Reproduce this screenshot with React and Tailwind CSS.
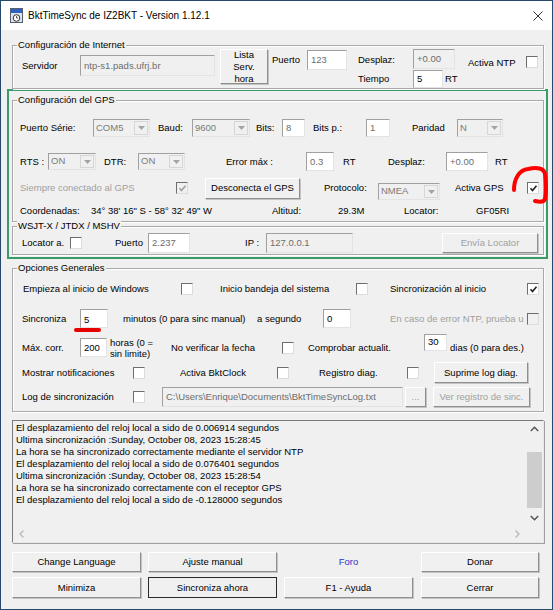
import React from "react";

// =========================
// SMALL WIN32-LIKE CONTROLS
// =========================
const sunken =
  "border border-t-[#a0a0a0] border-l-[#a0a0a0] border-b-[#e3e3e3] border-r-[#e3e3e3]";

const Lbl = ({ className = "", children }) => (
  <span className={"shrink-0 whitespace-nowrap leading-[12px] " + className}>{children}</span>
);

function TextBox({ className = "", value, disabled, gray }) {
  return (
    <div
      className={`shrink-0 flex items-center overflow-hidden whitespace-nowrap px-[3px] leading-[12px] ${sunken} ${
        disabled ? "bg-[#f0f0f0] text-[#6d6d6d]" : "bg-white"
      } ${gray ? "text-[#6d6d6d]" : ""} ${className}`}
    >
      {value}
    </div>
  );
}

function Combo({ className = "", value }) {
  return (
    <div className={`shrink-0 flex bg-[#f0f0f0] ${sunken} ${className}`}>
      <span className="flex-1 pl-[2px] flex items-center text-[#7a7a7a]">{value}</span>
      <span className="w-[14px] m-[1px] flex items-center justify-center border border-[#d6d6d6] bg-[#f0f0f0]">
        <svg width="7" height="4" viewBox="0 0 7 4">
          <path d="M0 0h7L3.5 4z" fill="#a3a3a3" />
        </svg>
      </span>
    </div>
  );
}

function Check({ checked, disabled, className = "" }) {
  return (
    <span
      className={`shrink-0 w-[12px] h-[12px] flex items-center justify-center border border-t-[#6d6d6d] border-l-[#6d6d6d] border-b-[#dcdcdc] border-r-[#dcdcdc] ${
        disabled ? "bg-[#f0f0f0]" : "bg-white"
      } ${className}`}
    >
      {checked && (
        <svg width="9" height="9" viewBox="0 0 9 9">
          <path d="M1.5 4.3l2 2.2 4-4.8" fill="none" stroke={disabled ? "#a0a0a0" : "#222"} strokeWidth="1.6" />
        </svg>
      )}
    </span>
  );
}

function Btn({ className = "", children, disabled, focus }) {
  return (
    <div
      className={`shrink-0 flex items-center justify-center text-center leading-[12px] bg-[#f0f0f0] border ${
        focus
          ? "border-[#2b2b2b]"
          : "border-t-white border-l-white border-b-[#8f8f8f] border-r-[#8f8f8f] shadow-[1px_1px_0_#c4c4c4]"
      } ${disabled ? "text-[#a0a0a0]" : ""} ${className}`}
    >
      {children}
    </div>
  );
}

function Group({ title, className = "", children }) {
  return (
    <div className={`relative shrink-0 border border-[#a9a9a9] shadow-[inset_1px_1px_0_#fff,1px_1px_0_#fff] ${className}`}>
      <span className="absolute left-[4px] top-[-7px] bg-[#f0f0f0] px-[1px] leading-[12px]">{title}</span>
      {children}
    </div>
  );
}

const Chevron = ({ d, color = "#505050" }) => (
  <svg width="9" height="6" viewBox="0 0 9 6">
    <path d={d} fill="none" stroke={color} strokeWidth="1.4" />
  </svg>
);

const logLines = [
  "El desplazamiento del reloj local a sido de 0.006914 segundos",
  "Ultima sincronización :Sunday, October 08, 2023 15:28:45",
  "La hora se ha sincronizado correctamente mediante el servidor NTP",
  "El desplazamiento del reloj local a sido de 0.076401 segundos",
  "Ultima sincronización :Sunday, October 08, 2023 15:28:54",
  "La hora se ha sincronizado correctamente con el receptor GPS",
  "El desplazamiento del reloj local a sido de -0.128000 segundos",
];

export default function App() {
  return (
    <div className="w-[553px] h-[610px] flex flex-col overflow-hidden bg-[#f0f0f0] border border-[#26486b] text-black text-[9.5px] font-['Liberation_Sans',Arial,sans-serif]">
      {/* TITLE BAR */}
      <div className="h-[29px] shrink-0 flex items-center bg-white">
        <svg className="ml-[9px]" width="13" height="15" viewBox="0 0 13 15">
          <rect x="0.5" y="0.5" width="12" height="14" fill="#dde3ea" stroke="#55606e" />
          <rect x="1" y="1" width="11" height="4" fill="#2f5fbf" />
          <circle cx="6.5" cy="10" r="3.3" fill="#fff" stroke="#333" />
          <path d="M6.5 8v2h1.6" fill="none" stroke="#333" strokeWidth="0.8" />
        </svg>
        <span className="ml-[5px] text-[10px]">BktTimeSync de IZ2BKT - Version 1.12.1</span>
        <svg className="ml-auto mr-[9px]" width="10" height="10" viewBox="0 0 10 10">
          <path d="M0.5 0.5l9 9M9.5 0.5l-9 9" stroke="#333" strokeWidth="1" />
        </svg>
      </div>

      {/* CONFIGURACION DE INTERNET */}
      <Group title="Configuración de Internet" className="ml-[11px] mt-[15px] w-[532px] h-[44px]">
        <div className="flex items-start pl-[9px]">
          <Lbl className="w-[58px] mt-[14px]">Servidor</Lbl>
          <TextBox disabled className="w-[135px] h-[21px] mt-[9px]" value="ntp-s1.pads.ufrj.br" />
          <Btn className="ml-[5px] w-[48px] h-[35px] mt-[3px]">
            Lista
            <br />
            Serv.
            <br />
            hora
          </Btn>
          <Lbl className="ml-[4px] w-[35px] mt-[8px]">Puerto</Lbl>
          <TextBox gray className="w-[40px] h-[20px] mt-[4px]" value="123" />
          <div className="ml-[11px] w-[55px] flex flex-col">
            <Lbl className="mt-[8px]">Desplaz:</Lbl>
            <Lbl className="mt-[7px]">Tiempo</Lbl>
          </div>
          <div className="w-[55px] flex flex-col">
            <TextBox disabled className="w-[42px] h-[20px] mt-[3px]" value="+0.00" />
            <div className="flex items-center mt-[1px]">
              <TextBox className="w-[30px] h-[18px]" value="5" />
              <Lbl className="ml-[2px]">RT</Lbl>
            </div>
          </div>
          <Lbl className="w-[58px] mt-[11px]">Activa NTP</Lbl>
          <Check className="mt-[10px]" />
        </div>
      </Group>

      {/* GREEN MARK AROUND GPS */}
      <div className="ml-[6px] w-[541px] h-[170px] shrink-0 flex flex-col border-2 border-[#3a9a68]">
        <Group title="Configuración del GPS" className="ml-[3px] mt-[9px] w-[532px] h-[122px]">
          <div className="flex items-center h-[18px] mt-[18px] pl-[7px]">
            <Lbl className="w-[73px]">Puerto Série:</Lbl>
            <Combo className="w-[57px] h-[18px]" value="COM5" />
            <Lbl className="ml-[8px] w-[34px]">Baud:</Lbl>
            <Combo className="w-[58px] h-[18px]" value="9600" />
            <Lbl className="ml-[6px] w-[26px]">Bits:</Lbl>
            <TextBox gray className="w-[23px] h-[18px]" value="8" />
            <Lbl className="ml-[8px] w-[53px]">Bits p.:</Lbl>
            <TextBox gray className="w-[24px] h-[18px]" value="1" />
            <Lbl className="ml-[22px] w-[45px]">Paridad</Lbl>
            <Combo className="w-[46px] h-[18px]" value="N" />
          </div>
          <div className="flex items-center h-[19px] mt-[15px] pl-[7px]">
            <Lbl className="w-[28px]">RTS :</Lbl>
            <Combo className="w-[48px] h-[17px]" value="ON" />
            <Lbl className="ml-[8px] w-[34px]">DTR:</Lbl>
            <Combo className="w-[47px] h-[17px]" value="ON" />
            <Lbl className="ml-[41px] w-[80px]">Error máx :</Lbl>
            <TextBox gray className="w-[28px] h-[19px]" value="0.3" />
            <Lbl className="ml-[9px] w-[45px]">RT</Lbl>
            <Lbl className="w-[58px]">Desplaz:</Lbl>
            <TextBox gray className="w-[42px] h-[19px]" value="+0.00" />
            <Lbl className="ml-[7px]">RT</Lbl>
          </div>
          <div className="flex items-center h-[24px] mt-[5px] pl-[7px]">
            <Lbl className="w-[156px] text-[#a0a0a0]">Siempre conectado al GPS</Lbl>
            <Check checked disabled />
            <Btn className="ml-[17px] w-[95px] h-[21px]">Desconecta el GPS</Btn>
            <Lbl className="ml-[24px] w-[54px]">Protocolo:</Lbl>
            <Combo className="w-[62px] h-[17px] self-end" value="NMEA" />
            <Lbl className="ml-[15px] w-[72px]">Activa GPS</Lbl>
            <Check checked />
          </div>
          <div className="flex items-center h-[12px] mt-[5px] pl-[7px]">
            <Lbl className="w-[71px]">Coordenadas:</Lbl>
            <Lbl className="w-[181px]">34° 38' 16" S - 58° 32' 49" W</Lbl>
            <Lbl className="w-[66px]">Altitud:</Lbl>
            <Lbl className="w-[66px]">29.3M</Lbl>
            <Lbl className="w-[72px]">Locator:</Lbl>
            <Lbl>GF05RI</Lbl>
          </div>
          {/* red hand-drawn mark */}
          <svg className="absolute left-[497px] top-[63px]" width="40" height="42" viewBox="0 0 40 42">
            <path
              d="M4 26C4 15 9 6 18 5C27 3 34 4 35 10C36 18 36 30 35 35C34 38 29 38 25 37"
              fill="none"
              stroke="#ff0000"
              strokeWidth="4"
              strokeLinecap="round"
              strokeLinejoin="round"
            />
          </svg>
        </Group>

        <Group title="WSJT-X / JTDX / MSHV" className="ml-[3px] mt-[4px] w-[532px] h-[29px]">
          <div className="flex items-center h-[20px] mt-[6px] pl-[9px]">
            <Lbl className="w-[48px]">Locator a.</Lbl>
            <Check />
            <Lbl className="ml-[33px] w-[33px]">Puerto</Lbl>
            <TextBox gray className="w-[42px] h-[20px]" value="2.237" />
            <Lbl className="ml-[55px] w-[21px]">IP :</Lbl>
            <TextBox disabled className="w-[87px] h-[20px]" value="127.0.0.1" />
            <Btn disabled className="ml-[89px] w-[96px] h-[20px]">Envía Locator</Btn>
          </div>
        </Group>
      </div>

      {/* OPCIONES GENERALES */}
      <Group title="Opciones Generales" className="ml-[11px] mt-[9px] w-[532px] h-[144px]">
        <div className="flex items-center h-[12px] mt-[14px] pl-[10px]">
          <Lbl className="w-[158px]">Empieza al inicio de Windows</Lbl>
          <Check />
          <Lbl className="ml-[27px] w-[136px]">Inicio bandeja del sistema</Lbl>
          <Check />
          <Lbl className="ml-[22px] w-[137px]">Sincronización al inicio</Lbl>
          <Check checked />
        </div>
        <div className="flex items-center h-[21px] mt-[13px] pl-[9px]">
          <Lbl className="w-[58px]">Sincroniza</Lbl>
          <div className="relative shrink-0">
            <TextBox className="w-[28px] h-[19px] pt-[3px]" value="5" />
            <span className="absolute left-[-6px] top-[19px] w-[27px] h-[4px] rounded-full bg-[#e60000]" />
          </div>
          <Lbl className="ml-[15px] w-[134px]">minutos (0 para sinc manual)</Lbl>
          <Lbl className="w-[66px]">a segundo</Lbl>
          <TextBox className="w-[28px] h-[19px]" value="0" />
          <Lbl className="ml-[39px] w-[137px] text-[#a0a0a0]">En caso de error NTP, prueba u</Lbl>
          <Check disabled />
        </div>
        <div className="flex items-center h-[27px] mt-[5px] pl-[9px]">
          <Lbl className="w-[58px]">Máx. corr.</Lbl>
          <TextBox className="w-[27px] h-[19px]" value="200" />
          <span className="ml-[3px] w-[61px] shrink-0 leading-[11px] whitespace-nowrap">
            horas (0 =
            <br />
            sin limite)
          </span>
          <Lbl className="w-[111px]">No verificar la fecha</Lbl>
          <Check />
          <Lbl className="ml-[14px] w-[116px]">Comprobar actualit.</Lbl>
          <TextBox className="w-[23px] h-[17px] self-start items-start pt-[1px]" value="30" />
          <Lbl className="ml-[3px]">dias (0 para des.)</Lbl>
        </div>
        <div className="flex items-center h-[21px] mt-[1px] pl-[9px]">
          <Lbl className="w-[111px]">Mostrar notificaciones</Lbl>
          <Check />
          <Lbl className="ml-[35px] w-[97px]">Activa BktClock</Lbl>
          <Check />
          <Lbl className="ml-[30px] w-[88px]">Registro diag.</Lbl>
          <Check />
          <Btn className="ml-[15px] w-[94px] h-[21px]">Suprime log diag.</Btn>
        </div>
        <div className="flex items-center h-[21px] mt-[3px] pl-[9px]">
          <Lbl className="w-[111px]">Log de sincronización</Lbl>
          <Check />
          <TextBox
            disabled
            className="ml-[17px] w-[241px] h-[20px]"
            value="C:\Users\Enrique\Documents\BktTimeSyncLog.txt"
          />
          <Btn disabled className="ml-[2px] w-[21px] h-[20px]">...</Btn>
          <Btn disabled className="ml-[7px] w-[97px] h-[20px]">Ver registro de sinc.</Btn>
        </div>
      </Group>

      {/* LOG */}
      <div className="ml-[11px] mt-[8px] w-[532px] h-[123px] shrink-0 flex flex-col bg-[#f0f0f0] border border-t-[#7a7a7a] border-l-[#7a7a7a] border-b-[#e8e8e8] border-r-[#e8e8e8] shadow-[1px_1px_0_#a0a0a0]">
        <div className="flex-1 flex min-h-0">
          <div className="flex-1 min-w-0 pl-[3px] pt-[1px] leading-[12px] whitespace-nowrap overflow-hidden">
            {logLines.map((l, i) => (
              <div key={i}>{l}</div>
            ))}
          </div>
          <div className="w-[17px] shrink-0 flex flex-col">
            <div className="h-[16px] shrink-0 flex items-center justify-center">
              <Chevron d="M0.8 5L4.5 1.2 8.2 5" />
            </div>
            <div className="flex-1 px-[1px]">
              <div className="mt-[15px] h-[56px] bg-[#cdcdcd]" />
            </div>
            <div className="h-[16px] shrink-0 flex items-center justify-center">
              <Chevron d="M0.8 1L4.5 4.8 8.2 1" />
            </div>
          </div>
        </div>
        <div className="h-[16px] shrink-0 flex">
          <div className="flex-1 flex items-center justify-between px-[6px]">
            <svg width="5" height="8" viewBox="0 0 5 8">
              <path d="M4.5 0.5L1 4l3.5 3.5" fill="none" stroke="#b5b5b5" strokeWidth="1.2" />
            </svg>
            <svg width="5" height="8" viewBox="0 0 5 8">
              <path d="M0.5 0.5L4 4 0.5 7.5" fill="none" stroke="#b5b5b5" strokeWidth="1.2" />
            </svg>
          </div>
          <div className="w-[17px] shrink-0" />
        </div>
      </div>

      {/* BUTTONS */}
      <div className="ml-[11px] mt-[9px] flex h-[20px] shrink-0">
        <Btn className="w-[129px] h-[20px]">Change Language</Btn>
        <Btn className="ml-[7px] w-[129px] h-[20px]">Ajuste manual</Btn>
        <div className="ml-[7px] w-[129px] flex items-center justify-center text-[#3232c8]">Foro</div>
        <Btn className="ml-[8px] w-[118px] h-[20px]">Donar</Btn>
      </div>
      <div className="ml-[11px] mt-[5px] flex h-[21px] shrink-0">
        <Btn className="w-[129px] h-[21px]">Minimiza</Btn>
        <Btn focus className="ml-[7px] w-[129px] h-[21px]">Sincroniza ahora</Btn>
        <Btn className="ml-[7px] w-[129px] h-[21px]">F1 - Ayuda</Btn>
        <Btn className="ml-[8px] w-[118px] h-[21px]">Cerrar</Btn>
      </div>
    </div>
  );
}
